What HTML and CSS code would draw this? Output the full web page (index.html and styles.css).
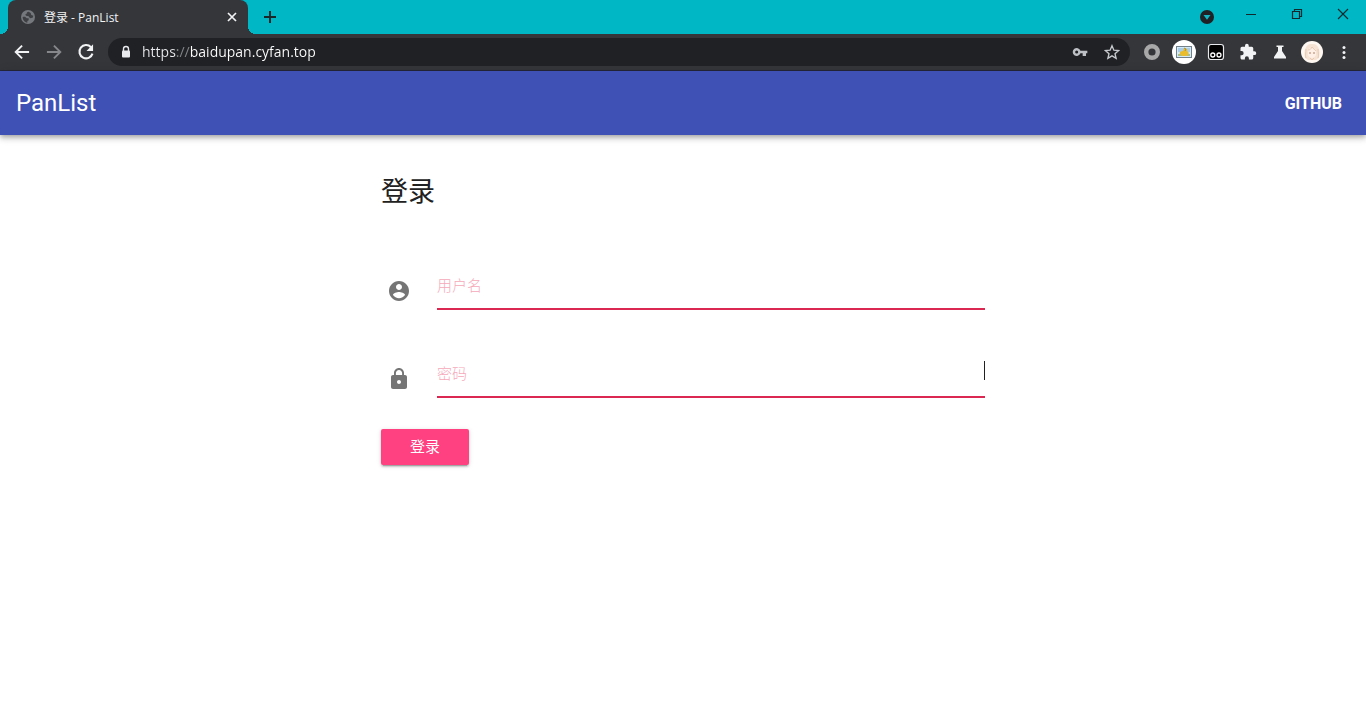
FILE: index.html
```html
<!DOCTYPE html>
<html lang="zh-CN">
<head>
<meta charset="utf-8">
<meta name="viewport" content="width=device-width, initial-scale=1">
<title>登录 - PanList</title>
<link rel="stylesheet" href="styles.css">
</head>
<body>
<div class="browser">
  <div class="tabstrip">
    <div class="tab">
      <svg class="tab-icon" width="16" height="16" viewBox="0 0 24 24"><circle cx="12" cy="12" r="10.500" fill="#75787c"/><path d="M4 12c3-1 5 0 6 2h3v3l-2 1v2.500C7 20 4 16 4 12zM13 4c-2 0-3 1-3 3l-2 1 1 2 4 1 2 3 4-1 1-3-3-1-1-3z" fill="#3d3f43"/></svg>
      <span class="tab-title">登录 - PanList</span>
      <button class="icon-button tab-close" aria-label="关闭标签页"><svg width="16" height="16" viewBox="0 0 16 16"><path d="m4 4 8 8m0-8-8 8" stroke="#f1f3f4" stroke-width="1.700"/></svg></button>
    </div>
    <button class="icon-button new-tab" aria-label="新标签页"><svg width="28" height="28" viewBox="0 0 28 28"><path d="M14 8v12M8 14h12" stroke="#17282b" stroke-width="2"/></svg></button>
    <div class="window-controls">
      <button class="icon-button tab-search" aria-label="搜索标签页"><svg width="14" height="14" viewBox="0 0 14 14"><circle cx="7" cy="7" r="7" fill="#202124"/><path d="m3.500 5h7L7 9.800z" fill="#12b5c4"/></svg></button>
      <button class="icon-button window-button" aria-label="最小化"><svg width="12" height="12" viewBox="0 0 12 12"><path d="M1 6.500h10" stroke="#10282b"/></svg></button>
      <button class="icon-button window-button" aria-label="还原"><svg width="12" height="12" viewBox="0 0 12 12"><path d="M1.500 3.500h7v7h-7zM3.500 3V1.500h7v7H9" fill="none" stroke="#10282b" stroke-width="1.200"/></svg></button>
      <button class="icon-button window-button" aria-label="关闭"><svg width="12" height="12" viewBox="0 0 12 12"><path d="m1 1 10 10M11 1 1 11" stroke="#10282b" stroke-width="1.100"/></svg></button>
    </div>
  </div>
  <div class="toolbar">
    <div class="navigation">
      <button class="icon-button" aria-label="后退"><svg width="20" height="20" viewBox="0 0 24 24" fill="#f1f3f4"><path d="M20.500 10.800H7.200l5.700-5.700L11.300 3.500 2.800 12l8.500 8.500 1.600-1.600-5.700-5.700h13.300z"/></svg></button>
      <button class="icon-button" aria-label="前进"><svg width="20" height="20" viewBox="0 0 24 24" fill="#85878a"><path d="M3.500 10.800h13.300l-5.700-5.700 1.600-1.600 8.500 8.500-8.500 8.500-1.600-1.600 5.700-5.700H3.500z"/></svg></button>
      <button class="icon-button" aria-label="刷新"><svg width="20" height="20" viewBox="0 0 24 24"><path d="M18 6.200A8 8 0 1 0 19.800 14" fill="none" stroke="#f1f3f4" stroke-width="2.500"/><path d="M20.500 2.800v7.900h-7.900z" fill="#f1f3f4"/></svg></button>
    </div>
    <div class="omnibox">
      <svg width="12" height="14" viewBox="0 0 12 14"><path d="M3.500 6V4a2.500 2.500 0 0 1 5 0v2" fill="none" stroke="#e8eaed" stroke-width="1.400"/><rect x="2" y="5.500" width="8" height="7" rx="1" fill="#e8eaed"/></svg>
      <input class="address" type="text" aria-label="网址" value="https://baidupan.cyfan.top">
      <button class="icon-button" aria-label="密码"><svg width="16" height="16" viewBox="0 0 24 24"><path fill="#bdc1c6" fill-rule="evenodd" d="M12.700 10A6 6 0 1 0 12.700 14H16v4h5v-4h2v-4zM7 14.300a2.300 2.300 0 1 1 0-4.600 2.300 2.300 0 0 1 0 4.600z"/></svg></button>
      <button class="icon-button" aria-label="添加书签"><svg width="16" height="16" viewBox="0 0 24 24"><path d="m12 2.500 2.800 6.700 7.200.6-5.500 4.700 1.700 7-6.200-3.700-6.200 3.700 1.700-7L2 9.800l7.200-.6z" fill="none" stroke="#c6c9cd" stroke-width="2"/></svg></button>
    </div>
    <div class="extensions">
      <button class="icon-button" aria-label="扩展"><svg width="18" height="18" viewBox="0 0 18 18"><circle cx="9" cy="9" r="5.800" fill="none" stroke="#a8a8a9" stroke-width="4.400"/></svg></button>
      <button class="icon-button" aria-label="图片扩展"><svg width="24" height="24" viewBox="0 0 24 24"><circle cx="12" cy="12" r="12" fill="#fff"/><rect x="4.500" y="6.500" width="15" height="11" fill="#d3eaf9" stroke="#72808a"/><path d="M6 8h12v4H6z" fill="#a9cde8"/><path d="M6 14h12v2H6z" fill="#aabf87"/><path d="M8 14c-1-2 1-3 3-3l1-3 3 1v2l2 2-2 3h-5z" fill="#e9bd2d"/><path d="m12 8 2 1-1 2" fill="none" stroke="#b99125"/></svg></button>
      <button class="icon-button" aria-label="脚本扩展"><svg width="18" height="18" viewBox="0 0 18 18"><rect x="1.500" y="1.500" width="15" height="15" rx="2.500" fill="#000" stroke="#e8eaed" stroke-width="1.200"/><g fill="#000" stroke="#fff" stroke-width="1.300"><circle cx="5.800" cy="12" r="2"/><circle cx="12" cy="12" r="2"/></g></svg></button>
      <button class="icon-button" aria-label="扩展程序"><svg width="18" height="18" viewBox="0 0 24 24" fill="#f1f3f4"><path d="M20.500 11H19V7a2 2 0 0 0-2-2h-4V3.500a2.500 2.500 0 0 0-5 0V5H4a2 2 0 0 0-2 2v3.800h1.500a2.700 2.700 0 0 1 0 5.400H2V20c0 1.100.9 2 2 2h3.800v-1.500a2.700 2.700 0 0 1 5.400 0V22H17a2 2 0 0 0 2-2v-4h1.500a2.500 2.500 0 0 0 0-5z"/></svg></button>
      <button class="icon-button" aria-label="实验"><svg width="16" height="16" viewBox="0 0 16 16" fill="#f1f3f4"><path d="M4.500 1.500h7V3H10v4l4 6v1.500H2V13l4-6V3H4.500z"/></svg></button>
      <button class="icon-button" aria-label="个人资料"><svg width="22" height="22" viewBox="0 0 22 22"><circle cx="11" cy="11" r="11" fill="#fff8f2"/><path d="M4 17C2 8 6 2 11 3c6-1 9 6 7 14l-3 2H7z" fill="#f6e3d3"/><path d="M7 9c2-3 6-3 8 0v5c-2 4-6 4-8 0z" fill="#fff0e7"/><path d="M7 9c2 0 3-1 4-3 1 2 3 2 4 4M5 8c0 4-1 6 0 9M17 8c0 4 1 6 0 9M9 17l2 2 2-2" fill="none" stroke="#e6cab4"/><circle cx="9" cy="12" r="1" fill="#cda590"/><circle cx="13" cy="12" r="1" fill="#cda590"/></svg></button>
      <button class="icon-button" aria-label="菜单"><svg width="16" height="16" viewBox="0 0 16 16" fill="#f1f3f4"><circle cx="8" cy="3.500" r="1.500"/><circle cx="8" cy="8.500" r="1.500"/><circle cx="8" cy="13.500" r="1.500"/></svg></button>
    </div>
  </div>
</div>
<header class="appbar">
  <a class="brand" href="#">PanList</a>
  <a class="github" href="#">GITHUB</a>
</header>
<main class="login">
  <h1 class="title">登录</h1>
  <form class="form">
    <div class="field">
      <svg class="field-icon" width="24" height="24" viewBox="0 0 24 24"><path d="M12 2C6.480 2 2 6.480 2 12s4.480 10 10 10 10-4.480 10-10S17.520 2 12 2zm0 3c1.660 0 3 1.340 3 3s-1.340 3-3 3-3-1.340-3-3 1.340-3 3-3zm0 14.200c-2.500 0-4.710-1.280-6-3.220.03-1.990 4-3.080 6-3.080 1.990 0 5.970 1.090 6 3.080-1.290 1.940-3.500 3.220-6 3.220z"/></svg>
      <div class="field-body">
        <label class="field-label" for="username">用户名</label>
        <input class="field-input" id="username" type="text">
      </div>
    </div>
    <div class="field">
      <svg class="field-icon" width="24" height="24" viewBox="0 0 24 24"><path d="M18 8h-1V6c0-2.760-2.240-5-5-5S7 3.240 7 6v2H6c-1.100 0-2 .9-2 2v10c0 1.100.9 2 2 2h12c1.100 0 2-.9 2-2V10c0-1.100-.9-2-2-2zm-6 9c-1.100 0-2-.9-2-2s.9-2 2-2 2 .9 2 2-.9 2-2 2zm3.100-9H8.900V6c0-1.710 1.390-3.100 3.100-3.100 1.710 0 3.100 1.390 3.100 3.100v2z"/></svg>
      <div class="field-body">
        <label class="field-label" for="password">密码</label>
        <input class="field-input" id="password" type="password">
        <span class="caret"></span>
      </div>
    </div>
    <button class="submit" type="button">登录</button>
  </form>
</main>
</body>
</html>
```

FILE: styles.css
```css
* {
  box-sizing: border-box;
}

body {
  margin: 0;
  background: #fff;
  color: #212121;
  font-family: Roboto, "Noto Sans CJK SC", sans-serif;
}

svg {
  display: block;
  flex: none;
}

.icon-button {
  display: flex;
  flex: none;
  align-items: center;
  justify-content: center;
  padding: 0;
  border: 0;
  background: none;
}

.browser {
  font-family: "Open Sans", "Noto Sans CJK SC", sans-serif;
}

.tabstrip {
  display: flex;
  height: 34px;
  padding-left: 8px;
  background: #00b7c6;
}

.tab {
  position: relative;
  display: flex;
  align-items: center;
  width: 240px;
  padding: 0 8px 0 12px;
  border-radius: 8px 8px 0 0;
  background: #35363a;
  color: #f1f3f4;
  font-size: 12px;
}

.tab::before,
.tab::after {
  content: "";
  position: absolute;
  bottom: 0;
  width: 8px;
  height: 8px;
}

.tab::before {
  right: 100%;
  background: radial-gradient(circle at 0 0, transparent 8px, #35363a 8px);
}

.tab::after {
  left: 100%;
  background: radial-gradient(circle at 100% 0, transparent 8px, #35363a 8px);
}

.tab-title {
  flex: 1;
  margin-left: 8px;
}

.new-tab {
  margin-left: 8px;
}

.window-controls {
  display: flex;
  margin-left: auto;
}

.tab-search {
  margin-right: 14px;
}

.window-button {
  width: 46px;
  height: 28px;
}

.toolbar {
  display: flex;
  align-items: center;
  height: 37px;
  padding: 0 14px 0 12px;
  border-bottom: 1px solid #27283c;
  background: #35363a;
}

.navigation {
  display: flex;
  gap: 12px;
}

.omnibox {
  display: flex;
  flex: 1;
  align-items: center;
  gap: 16px;
  height: 28px;
  margin-left: 12px;
  padding: 0 10px 0 12px;
  border-radius: 14px;
  background: #202124;
}

.address {
  flex: 1;
  min-width: 0;
  height: 24px;
  margin-left: -6px;
  padding: 0 0 2px;
  border: 0;
  outline: 0;
  background: linear-gradient(90deg, #e8eaed 34px, #85888c 34px, #85888c 48px, #fff 48px);
  background-clip: text;
  color: transparent;
  font-family: inherit;
  font-size: 14px;
}

.extensions {
  display: grid;
  grid-template-columns: repeat(7, 32px);
  place-items: center;
  margin-left: 6px;
  margin-right: -8px;
}

.appbar {
  display: flex;
  align-items: center;
  justify-content: space-between;
  height: 64px;
  padding: 0 24px 0 16px;
  background: #3f51b5;
  box-shadow: 0 2px 4px -1px #0003, 0 4px 5px #0002, 0 1px 10px #0002;
}

.brand,
.github {
  color: #fff;
  text-decoration: none;
}

.brand {
  font-size: 24px;
}

.github {
  font-size: 16px;
  font-weight: 700;
}

.login {
  width: 100%;
  max-width: 636px;
  margin: 0 auto;
  padding: 36px 16px;
}

.title {
  margin: 0 0 40px;
  font-size: 27px;
  font-weight: 400;
  line-height: 42px;
}

.field {
  display: flex;
  align-items: flex-end;
  gap: 26px;
  height: 88px;
  padding: 0 0 31px 6px;
}

.field-icon {
  margin-bottom: 7px;
  fill: #757575;
}

.field-body {
  position: relative;
  flex: 1;
}

.field-label {
  position: absolute;
  top: 4px;
  left: 0;
  color: #f5a9ba;
  font-size: 15px;
  font-weight: 300;
  line-height: 20px;
}

.field-input {
  display: block;
  width: 100%;
  height: 38px;
  padding: 0;
  border: 0;
  border-bottom: 2px solid #db2853;
  border-radius: 0;
  outline: 0;
  background: none;
  font-size: 16px;
}

.caret {
  position: absolute;
  top: 1px;
  right: 0;
  width: 1px;
  height: 19px;
  background: #212121;
}

.submit {
  display: block;
  width: 88px;
  height: 36px;
  padding: 0 0 3px;
  border: 0;
  border-radius: 2px;
  background: #ff4081;
  box-shadow: 0 3px 1px -2px #0003, 0 2px 2px #0002, 0 1px 5px #0002;
  color: #fff;
  font-family: inherit;
  font-size: 15px;
  font-weight: 400;
}
```
